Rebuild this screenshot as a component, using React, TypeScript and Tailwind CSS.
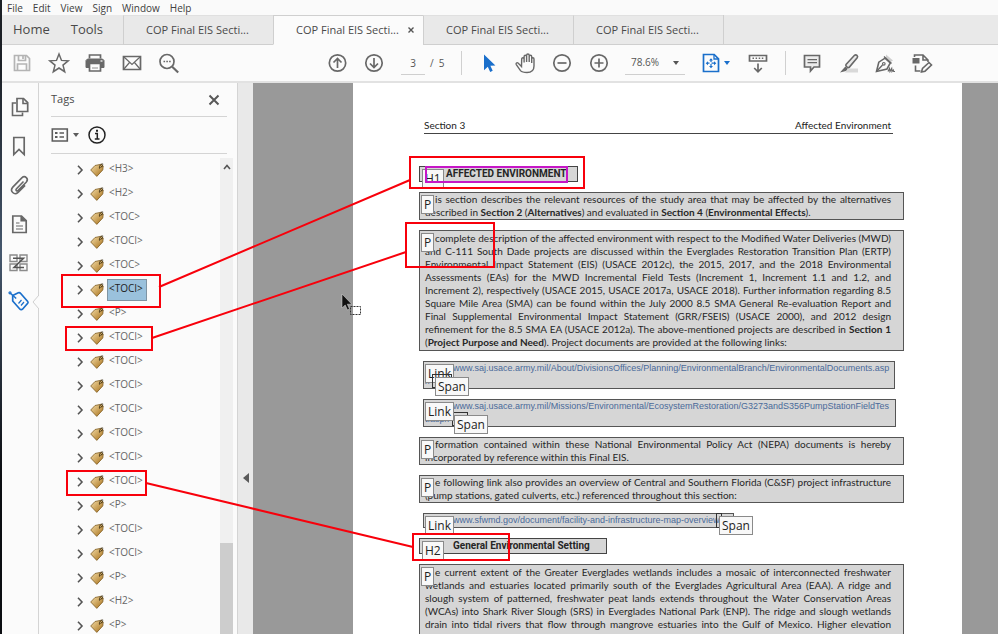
import type { ReactNode } from "react";
import clsx from "clsx";

const TREE = [
  "H3", "H2", "TOC", "TOCI", "TOC", "TOCI", "P", "TOCI", "TOCI", "TOCI",
  "TOCI", "TOCI", "TOCI", "TOCI", "P", "TOCI", "TOCI", "P", "H2", "P",
];
const SELECTED_ROW = 5;

const MENUS = ["File", "Edit", "View", "Sign", "Window", "Help"];

function Icon({ children, className }: { children: ReactNode; className?: string }) {
  return (
    <svg
      viewBox="0 0 24 24"
      className={clsx("h-6 w-6", className)}
      fill="none"
      stroke="currentColor"
      strokeWidth="1.7"
      aria-hidden
    >
      {children}
    </svg>
  );
}

function IconButton({ label, className, children }: { label: string; className?: string; children: ReactNode }) {
  return (
    <button type="button" aria-label={label} className={clsx("relative h-6 w-6 shrink-0", className ?? "text-[#686868]")}>
      <Icon>{children}</Icon>
    </button>
  );
}

function Caret({ className }: { className?: string }) {
  return (
    <svg viewBox="0 0 6 4" className={clsx("h-1 w-1.5 shrink-0", className)} fill="currentColor" aria-hidden>
      <path d="M0 0h6L3 4z" />
    </svg>
  );
}

function Divider() {
  return <div className="h-6 w-px shrink-0 bg-[#d0d0d0]" />;
}

function MenuBar() {
  return (
    <nav className="flex h-[15px] shrink-0 items-center gap-2.5 bg-[#fafafa] pl-[5px] text-[10px] leading-[14px] text-[#404040]">
      {MENUS.map((m) => (
        <button type="button" key={m}>
          {m}
        </button>
      ))}
    </nav>
  );
}

function TabBar() {
  return (
    <div className="flex h-[30px] shrink-0 bg-[#e9e9e9] text-[#4a4a4a]">
      <div className="flex w-[121px] shrink-0 items-center gap-[21px] border-b border-[#d2d2d2] pl-[11px] text-[13px]">
        <button type="button">Home</button>
        <button type="button">Tools</button>
      </div>
      {[0, 1, 2, 3].map((i) => (
        <div
          key={i}
          className={clsx(
            "flex w-[150px] shrink-0 items-center border-y border-l border-l-[#cfcfcf] pl-[22px] text-[11px]",
            i === 1 ? "border-t-[#cfcfcf] border-b-[#fbfbfb] bg-[#fbfbfb]" : "border-t-[#e0e0e0] border-b-[#cfcfcf]",
          )}
        >
          <button type="button">COP Final EIS Secti...</button>
          {i === 1 && (
            <button type="button" aria-label="Close tab" className="ml-[9px]">
              <svg viewBox="0 0 6 6" className="h-1.5 w-1.5" stroke="#555" strokeWidth="1.4" aria-hidden>
                <path d="M.5.5l5 5M5.5.5l-5 5" />
              </svg>
            </button>
          )}
        </div>
      ))}
      <div className="flex-1 border-b border-l border-[#cfcfcf]" />
    </div>
  );
}

function Toolbar() {
  return (
    <div className="flex h-[38px] shrink-0 items-center border-b-2 border-[#e2e2e2] bg-[#fbfbfb] pl-2 text-[10px] text-[#555]">
      <div className="flex w-[170px] shrink-0 justify-between">
        <IconButton label="Save" className="text-[#b4b4b4]">
          <path d="M4.5 4.5h12l3 3v12h-15z" />
          <path d="M8.5 4.5v5h7v-5M13 5v3M7.5 19v-6h9v6" />
        </IconButton>
        <IconButton label="Star">
          <path d="M12 3l2.5 6.4 6.7.4-5.2 4.3 1.7 6.6L12 17l-5.7 3.7L8 14.1 2.8 9.8l6.7-.4z" strokeWidth="1.5" />
        </IconButton>
        <IconButton label="Print">
          <path d="M6.500 7.500V4h11v3.500" />
          <path d="M3 9.500l1.500-1.500h15L21 9.500V16.500H3z" fill="currentColor" strokeWidth="1" />
          <path d="M6.500 12.500h11v7.500h-11z" fill="#fbfbfb" />
          <path d="M9 16h6v2H9z" fill="#c4c4c4" stroke="none" />
          <path d="M17.500 10h2" stroke="#fbfbfb" strokeWidth="1.300" />
        </IconButton>
        <IconButton label="Mail">
          <path d="M3.500 5.500h17v13h-17z" />
          <path d="M4 6l8 7.500L20 6M4 18l5.500-6.500M20 18l-5.500-6.500" strokeWidth="1.200" />
        </IconButton>
        <IconButton label="Find">
          <circle cx="11" cy="10.500" r="7" />
          <path d="M16.200 15.700l6 5.800" strokeWidth="2.200" />
          <path d="M7.500 10.500h1.600M10.300 10.500h1.600M13.100 10.500h1.600" strokeWidth="1.600" />
        </IconButton>
      </div>
      <div className="ml-[145px] flex shrink-0 gap-3">
        <IconButton label="Previous page">
          <circle cx="12.500" cy="12" r="8.200" />
          <path d="M12.500 17V7.500M8.500 11.500l4-4 4 4" />
        </IconButton>
        <IconButton label="Next page">
          <circle cx="13" cy="12" r="8.200" />
          <path d="M13 7v9.500M9 12.500l4 4 4-4" />
        </IconButton>
      </div>
      <input
        aria-label="Page number"
        defaultValue="3"
        className="ml-4 h-6 w-6 shrink-0 border-b border-[#cfcfcf] bg-transparent text-center outline-none"
      />
      <span className="ml-[5px] w-[15px] shrink-0 whitespace-nowrap">/&nbsp; 5</span>
      <div className="ml-4 flex shrink-0 items-center">
        <Divider />
      </div>
      <div className="ml-[15px] flex w-[134px] shrink-0 justify-between">
        <IconButton label="Select" className="text-[#1a6fcb]">
          <path d="M7 3.500v15.700l3.800-3.500 2.400 5.300 2.500-1.200-2.300-5.100 5-.200z" fill="currentColor" stroke="none" />
        </IconButton>
        <IconButton label="Hand">
          <path
            d="M7.500 15.500L4 12c-1-1-2.500.400-1.700 1.600l4.200 6C8 21.300 10 21.500 13 21.500c4.500 0 7-2.500 7-6.500V8c0-1.600-2.300-1.600-2.300 0v4V5.500c0-1.700-2.500-1.700-2.500 0V11 4.300c0-1.700-2.600-1.700-2.600 0V11 5.500c0-1.700-2.500-1.700-2.500 0v6V8c0-1.600-2.400-1.600-2.400 0z"
            strokeWidth="1.400"
          />
        </IconButton>
        <IconButton label="Zoom out">
          <circle cx="12" cy="12" r="8.200" />
          <path d="M7.500 12h9" />
        </IconButton>
        <IconButton label="Zoom in">
          <circle cx="12" cy="12" r="8.200" />
          <path d="M7.500 12h9M12 7.500v9" />
        </IconButton>
      </div>
      <div className="relative ml-[14px] flex shrink-0 items-center">
        <select
          aria-label="Zoom level"
          className="h-6 w-[60px] appearance-none border-b border-[#cfcfcf] bg-transparent pl-1.5 outline-none"
        >
          <option>78.6%</option>
        </select>
        <Caret className="pointer-events-none absolute right-1.5" />
      </div>
      <div className="ml-[14px] flex shrink-0 items-center text-[#1a6fcb]">
        <IconButton label="Fit page" className="text-[#1a6fcb]">
          <path d="M4.500 3.500h10.700l4.300 4.300v12.700h-15z" />
          <path d="M15 3.500V8h4.500" strokeWidth="1.300" />
          <path d="M12 8.500v7.500M8 12.200h8" strokeWidth="1.200" strokeDasharray="2.500 2" />
          <path d="M10 9.500l2-2.300 2 2.300zM10 15l2 2.300 2-2.300zM9 10.200l-2.300 2 2.300 2zM15 10.200l2.300 2-2.300 2z" fill="currentColor" stroke="none" />
        </IconButton>
        <Caret className="ml-px" />
      </div>
      <div className="ml-4 flex shrink-0 items-center gap-[15px]">
        <IconButton label="Scrolling mode">
          <path d="M3.500 4.500h17v5.500h-17z" />
          <path d="M6.500 7.200h11.500" strokeDasharray="1.500 1.600" strokeWidth="1.500" />
          <path d="M12 12.500v8M8.200 17l3.800 3.800 3.800-3.800" />
        </IconButton>
        <Divider />
      </div>
      <div className="ml-[14px] flex w-[134px] shrink-0 justify-between">
        <IconButton label="Comment">
          <path d="M4.500 4.500h15v11.500H14l-3.500 4V16h-6z" fill="#ececec" />
          <path d="M7.500 8.700h9.500M7.500 11.700h9.500" strokeWidth="1.200" />
        </IconButton>
        <IconButton label="Highlight">
          <path d="M12 17.500h9v4H8z" fill="#d9d9d9" stroke="none" />
          <path d="M9 13.500l8.500-9.200c1.600-1.300 4 .700 2.700 2.500l-8 9.500c-1.300 1-4.100-1.400-3.200-2.800z" fill="#e9e9e9" strokeWidth="1.600" />
          <path d="M8.300 15.500l2.500 2.300L9 20l-6 1.500z" fill="currentColor" stroke="none" />
        </IconButton>
        <IconButton label="Sign">
          <path d="M13 3.500l7 6-2.500 1.500-4.500-4z" fill="#cfcfcf" stroke="none" />
          <path d="M3.500 20.500l2.300-9.300 6.200-4 5.300 4.800-3.300 6z" strokeWidth="1.600" />
          <path d="M3.500 20.500l6-6.500M11 5.500l7.500 7" strokeWidth="1.400" />
          <circle cx="10.800" cy="12.800" r="1.300" strokeWidth="1.200" />
          <path d="M15 20.500l1.500-3 .500 3 1.700-3 .300 3 1.200-1.500.500 1.500H22" strokeWidth="1.200" />
        </IconButton>
        <IconButton label="More tools">
          <path d="M2.500 7h7v5.500h-7z" fill="currentColor" stroke="none" />
          <path d="M4.500 6V4H13l5 5v2M13 4v5h5" strokeWidth="1.600" />
          <path d="M5.500 14.500v5.500h5" strokeWidth="1.600" />
          <path d="M11.500 21l1-3.500 6.500-6 2.500 2.500-6.500 6.200z" fill="#fbfbfb" strokeWidth="1.600" />
        </IconButton>
      </div>
    </div>
  );
}

function NavRail() {
  return (
    <div className="flex w-[37px] shrink-0 flex-col items-start gap-[15px] border-r border-[#d4d4d4] bg-[#fbfbfb] pt-3 pl-[5px]">
      <IconButton label="Page thumbnails">
        <path d="M10 3.500h6.500l4.200 4.200v8.800H10z" />
        <path d="M16 4v4.500h4.500M9 8H5.500v12.500h10V17.500" strokeWidth="1.600" />
      </IconButton>
      <IconButton label="Bookmarks">
        <path d="M6.800 3.500h10.400v17L12 15.500l-5.200 5z" />
      </IconButton>
      <IconButton label="Attachments">
        <path d="M16.500 8.500L9.500 15.700c-1.400 1.400.300 3 1.700 1.700l8-8.200c3-3.300-1.200-7.300-4.400-4.300l-9 9.200c-3.500 4 1.500 8.700 5.300 5.300l7-7" strokeWidth="1.600" />
      </IconButton>
      <IconButton label="Document">
        <path d="M5.800 4h8.700l4.700 4.700V20.500H5.800z" />
        <path d="M14 4v5h5" fill="currentColor" strokeWidth="1.200" />
        <path d="M9 11h3.500M9 14h7M9 17h7" strokeWidth="1.200" />
      </IconButton>
      <IconButton label="Order" className="text-[#8b8b8b]">
        <path d="M3 4h7v6.500H3zM13 4h7v6.500h-7zM3 13h7v6.500H3zM13 13h7v6.500h-7z" strokeWidth="1.400" />
        <path d="M6 7.200h10.500L7 16.500h10" stroke="#555" strokeWidth="1.600" />
      </IconButton>
      <div className="relative flex">
        <IconButton label="Tags" className="text-[#1a6fcb]">
          <path d="M5.700 5.500l5.600-2.700c1-.4 1.800 0 2.400.7l7 8c.5.600.4 1.200 0 1.700l-5.200 6c-.7.700-2 .6-2.700-.2L5.700 11z" />
          <circle cx="3" cy="2.800" r="1" strokeWidth="1.200" />
          <path d="M3.700 3.500l5.500 5" strokeWidth="1.500" />
          <path d="M11.500 13.500l3-3.500M14 15.500l3-3.500" strokeWidth="1.200" />
        </IconButton>
        <svg viewBox="0 0 7 14" className="absolute top-[5px] left-[25px] h-3.5 w-[7px]" aria-hidden>
          <path d="M7 0L1 7l6 7" fill="#fbfbfb" stroke="#cfcfcf" />
        </svg>
      </div>
    </div>
  );
}

function TagGlyph() {
  return (
    <svg viewBox="0 0 14 14" className="h-3.5 w-3.5 shrink-0" aria-hidden>
      <defs>
        <linearGradient id="tagGold" x1="0" y1="0" x2="1" y2="1">
          <stop offset="0.2" stopColor="#e6c98d" />
          <stop offset="0.7" stopColor="#bd8f42" />
        </linearGradient>
      </defs>
      <path d="M.7 7L5 2.500 11.300 1.200l1.900 1.700-.400 4L6.800 13.400z" fill="url(#tagGold)" stroke="#7d5c22" strokeWidth=".8" />
      <path d="M9.500 5.500c-.500-3 2-5 3.700-4.300M10.500 4.500l2.500-2" fill="none" stroke="#33280f" strokeWidth="1" />
    </svg>
  );
}

function TagsPanel() {
  return (
    <aside className="flex w-[199px] shrink-0 flex-col border-r border-[#d4d4d4] bg-[#fbfbfb] pl-3">
      <div className="mr-[10px] flex h-[34px] shrink-0 items-center justify-between border-b border-[#d4d4d4] pr-[7px]">
        <h2 className="text-[11px] text-[#4a4a4a]">Tags</h2>
        <button type="button" aria-label="Close panel">
          <svg viewBox="0 0 12 12" className="h-3 w-3" stroke="#585858" strokeWidth="2" aria-hidden>
            <path d="M1.500 1.500l9 9M10.500 1.500l-9 9" />
          </svg>
        </button>
      </div>
      <div className="mr-[10px] flex h-[37px] shrink-0 items-center border-b border-[#d4d4d4] text-[#5c5c5c]">
        <button type="button" aria-label="Options" className="flex items-center gap-1">
          <svg viewBox="0 0 18 14" className="h-3.5 w-[18px]" fill="none" stroke="currentColor" strokeWidth="1.600" aria-hidden>
            <path d="M1.300 1h15v12h-15z" />
            <path d="M4 5h2.500M4 9h2.500" strokeWidth="2.200" />
            <path d="M8.500 5H13M8.500 9H13" strokeWidth="1.400" />
          </svg>
          <Caret />
        </button>
        <button type="button" aria-label="Info" className="ml-2">
          <svg viewBox="0 0 20 20" className="h-5 w-5" fill="none" stroke="#222" strokeWidth="1.500" aria-hidden>
            <circle cx="10" cy="10" r="8" />
            <path d="M8 8.500h2.300v5M7.800 14h4.700" strokeWidth="1.500" />
            <path d="M9 5.700h2" strokeWidth="2" />
          </svg>
        </button>
      </div>
      <div className="flex min-h-0 flex-1 justify-between">
        <ul className="pt-1 pl-[25px]">
          {TREE.map((tag, i) => (
            <li key={i} className="flex h-6 items-center">
              <svg viewBox="0 0 8 10" className="h-2.5 w-2 shrink-0" fill="none" stroke="#555" strokeWidth="1.600" aria-hidden>
                <path d="M2 .800L6 5 2 9.200" />
              </svg>
              <span className="ml-1.5 flex">
                <TagGlyph />
              </span>
              <button
                type="button"
                className={clsx(
                  "ml-[3px] h-[22px] border px-px pb-1 text-[10px] leading-4",
                  i === SELECTED_ROW
                    ? "border-[#7f94a3] bg-[#9ac1dc] pr-[3px] text-[#222]"
                    : "border-transparent text-[#666]",
                )}
              >
                &lt;{tag}&gt;
              </button>
            </li>
          ))}
        </ul>
        <div className="mt-1 mr-1 flex w-[13px] flex-col items-center bg-[#f0f0f0] pt-1.5">
          <svg viewBox="0 0 8 6" className="h-1.5 w-2 shrink-0" fill="none" stroke="#555" strokeWidth="1.600" aria-hidden>
            <path d="M1 5l3-3.500L7 5" />
          </svg>
          <div className="mt-[373px] w-full flex-1 bg-[#cdcdcd]" />
        </div>
      </div>
    </aside>
  );
}

/** Structure label laid over a tagged block. */
function Badge({ className, children }: { className: string; children: string }) {
  return (
    <span className={clsx("absolute z-10 border border-[#8a8a8a] bg-[#f8f8f8] px-0.5 font-['Open_Sans',sans-serif] text-xs leading-[17px] font-normal text-[#222]", className)}>
      {children}
    </span>
  );
}

// the first line starts clear of the badge
function Block({ badge, lines, last, className }: { badge: string; lines: ReactNode[]; last?: ReactNode; className?: string }) {
  return (
    <div className={clsx("relative border border-[#555] bg-[#d6d6d6] pr-3 pl-[5px]", className)}>
      <Badge className="top-0.5 left-px">{badge}</Badge>
      <p>
        {lines.map((line, i) => (
          <span
            key={i}
            className={clsx("block text-justify whitespace-nowrap [text-align-last:justify]", i === 0 && "pl-2.5")}
          >
            {line}
          </span>
        ))}
        {last && <span className="block whitespace-nowrap">{last}</span>}
      </p>
    </div>
  );
}

function LinkBlock({ className, lines, children }: { className?: string; lines: string[]; children: ReactNode }) {
  return (
    <div className={clsx("relative ml-1 border border-[#555] bg-[#d6d6d6] pl-px", className)}>
      {children}
      <a href="#" className="block font-['Liberation_Sans',Arial,sans-serif] text-[9px] text-[#4a6a9a]">
        {lines.map((line, i) => (
          <span key={line} className={clsx("block whitespace-nowrap", i === 0 && "pl-7")}>
            {line}
          </span>
        ))}
      </a>
    </div>
  );
}

function DocumentPage() {
  return (
    <main className="min-w-0 flex-1 overflow-hidden bg-[#999] pr-9 pl-[100px]">
      <article className="h-full overflow-hidden bg-white pr-[58px] pl-[66px] font-[Lato,sans-serif] text-[10px] leading-[13px] text-[#262626]">
        <header className="mr-[11px] ml-[5px] flex justify-between border-b border-[#444] pt-[34px] leading-4 text-[#222]">
          <span>Section 3</span>
          <span className="mr-0.5">Affected Environment</span>
        </header>
        <div className="mt-8 flex flex-col gap-2.5">
          <h1 className="relative w-[159px] border border-[#444] bg-[#d6d6d6] pl-[26px] font-[Roboto,sans-serif] leading-[14px] font-bold">
            <Badge className="top-0.5 left-0.5">H1</Badge>
            <span className="absolute -top-px left-[5px] z-20 h-[17px] w-[143px] border-2 border-[#c617c6]" />
            AFFECTED ENVIRONMENT
          </h1>
          <Block
            badge="P"
            lines={["is section describes the relevant resources of the study area that may be affected by the alternatives"]}
            last={<>described in <b>Section 2</b> (<b>Alternatives</b>) and evaluated in <b>Section 4</b> (<b>Environmental Effects</b>).</>}
          />
          <Block
            badge="P"
            className="py-px"
            lines={[
              "complete description of the affected environment with respect to the Modified Water Deliveries (MWD)",
              "and C-111 South Dade projects are discussed within the Everglades Restoration Transition Plan (ERTP)",
              "Environmental Impact Statement (EIS) (USACE 2012c), the 2015, 2017, and the 2018 Environmental",
              "Assessments (EAs) for the MWD Incremental Field Tests (Increment 1, Increment 1.1 and 1.2, and",
              "Increment 2), respectively (USACE 2015, USACE 2017a, USACE 2018). Further information regarding 8.5",
              "Square Mile Area (SMA) can be found within the July 2000 8.5 SMA General Re-evaluation Report and",
              "Final Supplemental Environmental Impact Statement (GRR/FSEIS) (USACE 2000), and 2012 design",
              <>refinement for the 8.5 SMA EA (USACE 2012a). The above-mentioned projects are described in <b>Section 1</b></>,
            ]}
            last={<>(<b>Project Purpose and Need</b>). Project documents are provided at the following links:</>}
          />
          <LinkBlock
            className="mr-[9px]"
            lines={["www.saj.usace.army.mil/About/DivisionsOffices/Planning/EnvironmentalBranch/EnvironmentalDocuments.asp", "x"]}
          >
            <Badge className="top-0.5 left-px">Link</Badge>
            <span className="absolute top-3 left-2 z-10 h-3.5 w-5 border border-[#333]" />
            <Badge className="top-[15px] left-[11px]">Span</Badge>
          </LinkBlock>
          <LinkBlock
            className="mr-2"
            lines={["www.saj.usace.army.mil/Missions/Environmental/EcosystemRestoration/G3273andS356PumpStationFieldTes", "t.aspx"]}
          >
            <span className="absolute top-3 left-7 h-3.5 w-4 border border-[#333]" />
            <Badge className="top-0.5 left-px">Link</Badge>
            <Badge className="top-[15px] left-[30px]">Span</Badge>
          </LinkBlock>
          <Block
            badge="P"
            lines={["formation contained within these National Environmental Policy Act (NEPA) documents is hereby"]}
            last="incorporated by reference within this Final EIS."
          />
          <Block
            badge="P"
            lines={["e following link also provides an overview of Central and Southern Florida (C&SF) project infrastructure"]}
            last="(pump stations, gated culverts, etc.) referenced throughout this section:"
          />
          <LinkBlock className="w-[311px]" lines={["www.sfwmd.gov/document/facility-and-infrastructure-map-overview"]}>
            <Badge className="top-0.5 left-px">Link</Badge>
            <span className="absolute -top-px left-[292px] h-[15px] w-1.5 border border-[#333]" />
            <Badge className="top-0.5 left-[295px]">Span</Badge>
          </LinkBlock>
          <h2 className="relative w-[188px] border border-[#444] bg-[#d6d6d6] pl-[33px] font-[Roboto,sans-serif] leading-[14px] font-bold">
            <Badge className="top-0.5 left-0.5">H2</Badge>
            General Environmental Setting
          </h2>
          <Block
            badge="P"
            className="pt-px pb-4"
            lines={[
              "e current extent of the Greater Everglades wetlands includes a mosaic of interconnected freshwater",
              "wetlands and estuaries located primarily south of the Everglades Agricultural Area (EAA). A ridge and",
              "slough system of patterned, freshwater peat lands extends throughout the Water Conservation Areas",
              "(WCAs) into Shark River Slough (SRS) in Everglades National Park (ENP). The ridge and slough wetlands",
              "drain into tidal rivers that flow through mangrove estuaries into the Gulf of Mexico. Higher elevation",
            ]}
          />
        </div>
      </article>
    </main>
  );
}

/** Red callouts joining tree rows to page blocks, plus the pointer. */
function Markup() {
  return (
    <svg className="pointer-events-none absolute top-0 left-0 z-30 h-[634px] w-[998px]" viewBox="0 0 998 634" fill="none" aria-hidden>
      <g stroke="#f8000b" strokeWidth="2">
        <path d="M62 275h98v32H62zM66 327h86v23H66zM67 471h79v24H67z" />
        <path d="M410 157h174v31H410zM406 223h88v44h-88zM413 534h96v26h-96z" />
        <path d="M159 287L410 180M152 338l254-86M146 483l267 64" />
      </g>
      <path d="M342 294v14l3.200-3 2.300 5 2-1-2.200-4.800h4.500z" fill="#111" stroke="#ddd" strokeWidth=".5" />
      <path d="M350.500 306.500h10v8h-10z" stroke="#333" strokeDasharray="2 1" />
    </svg>
  );
}

export default function App() {
  return (
    <div className="relative flex h-screen overflow-hidden bg-[#fbfbfb] font-['Open_Sans',sans-serif]">
      <div className="w-0.5 shrink-0 bg-linear-to-b from-[#1c2026] from-10% via-[#46586e] via-40% to-[#0c0e12] to-75%" />
      <div className="flex min-w-0 flex-1 flex-col">
        <MenuBar />
        <TabBar />
        <Toolbar />
        <div className="flex min-h-0 flex-1">
          <NavRail />
          <TagsPanel />
          <div className="w-[15px] shrink-0 bg-[#e9e9e9] pt-[390px] pl-[5px]">
            <button type="button" aria-label="Collapse panel" className="block">
              <svg viewBox="0 0 6 10" className="h-2.5 w-1.5" fill="#5a5a5a" aria-hidden>
                <path d="M6 0v10L0 5z" />
              </svg>
            </button>
          </div>
          <DocumentPage />
        </div>
      </div>
      <Markup />
    </div>
  );
}
